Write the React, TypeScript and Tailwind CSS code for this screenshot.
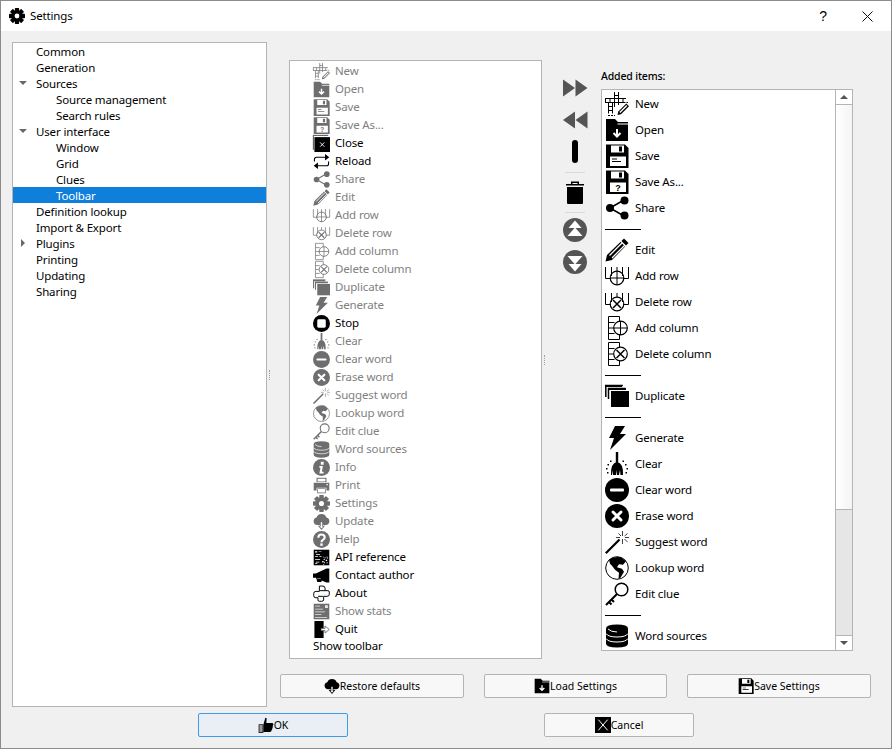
import React from "react";

const F = "font-['Noto_Sans',sans-serif]";

function Glyph({ name }: { name: string }) {
  const line = { fill: "none", stroke: "currentColor", strokeWidth: 1 } as const;
  const wline = { fill: "none", stroke: "#fff", strokeWidth: 2 } as const;
  switch (name) {
    case "new":
      return (
        <g>
          <path {...line} d="M9.500 0v15M13.500 0v13M9.500 3.500h4M0 6.500h21M0 10.500h23M.5 6.500v4M5 6.500v4M18 6.500v4M3.500 10.500v11M7.500 10.500v11M3.500 14.500h4M3.500 18.500h4" />
          <path {...line} strokeDasharray="2 1" d="M3 23.500h7" />
          <path fill="#fff" d="M11 24l1-5 9-9 3 3-9 9z" />
          <path fill="currentColor" d="M12.500 23l.8-3.500 8-8 2.700 2.700-8 8z" />
          <path fill="#fff" d="M14.300 20l7-7 1 1-7 7z" />
        </g>
      );
    case "open":
      return (
        <g>
          <path fill="currentColor" d="M1 1h9l3 3h10v19H1z" />
          <path fill="#fff" d="M12.500 5.500h10.500v1h-10.500z" />
          <path {...wline} d="M12 11v7M8.500 15l3.500 3.500 3.500-3.500" />
        </g>
      );
    case "save":
    case "saveas":
      return (
        <g>
          <path fill="currentColor" d="M1 .5h19l3.500 3.500v20H1z" />
          <path fill="#fff" d="M6 1.500h13v7H6zM5 12.500h16v9.500H5z" />
          <path fill="currentColor" d="M14 2.500h3v5h-3z" />
          {name === "save" ? (
            <path fill="currentColor" d="M7 14.500h5v1H7zM7 17h9v1H7z" />
          ) : (
            <text x="13" y="21" textAnchor="middle" fontSize="9" fontWeight="700" fill="currentColor" fontFamily="Liberation Sans">?</text>
          )}
        </g>
      );
    case "close":
      return (
        <g>
          <path {...line} d="M.5 21V.5h21" />
          <path fill="currentColor" d="M2 3h22v21H2z" />
          <path fill="none" stroke="#fff" strokeWidth="1.300" d="M10 10.500l6 6M16 10.500l-6 6" />
        </g>
      );
    case "reload":
      return (
        <g>
          <path fill="none" stroke="currentColor" strokeWidth="1.500" d="M2 12V9q0-3 3-3h13M22 12v3q0 3-3 3H6" />
          <path fill="currentColor" d="M17 1.500l6 4.500-6 4.500zM7 13.500L1 18l6 4.500z" />
        </g>
      );
    case "share":
      return (
        <g>
          <path fill="none" stroke="currentColor" strokeWidth="1.500" d="M5 12l14-8M5 12l14 8" />
          <circle cx="5" cy="12" r="4" fill="currentColor" />
          <circle cx="19.500" cy="4.500" r="4" fill="currentColor" />
          <circle cx="19.500" cy="19.500" r="4" fill="currentColor" />
        </g>
      );
    case "edit":
      return (
        <g>
          <path fill="currentColor" d="M19 .5L23.500 5 7 22 .5 23.500 2 17z" />
          <path fill="none" stroke="#fff" strokeWidth="1.300" d="M4.500 17.500L17 5M7 20L20 7M15.500 3l5.500 5.500" />
        </g>
      );
    case "addrow":
    case "delrow":
      return (
        <g>
          <path {...line} d="M.5 3v11.500h5.500M23.500 3v11.500h-5.500M6.500 3v9M17.500 3v9M12 3v4" />
          <circle {...line} cx="12" cy="14" r="6.800" strokeWidth="1.200" />
          {name === "addrow" ? (
            <path {...line} d="M12 7v14M5 14h14" />
          ) : (
            <path {...line} strokeWidth="1.500" d="M8 10l8 8M16 10l-8 8" />
          )}
        </g>
      );
    case "addcol":
    case "delcol":
      return (
        <g>
          <path {...line} d="M3.500 .5h11v5M3.500 .5v23h11v-5M3.500 6.500h6M3.500 17.500h6M3.500 12h5" />
          <circle {...line} cx="15.500" cy="12" r="6.800" strokeWidth="1.200" />
          {name === "addcol" ? (
            <path {...line} d="M15.500 5v14M8.500 12h14" />
          ) : (
            <path {...line} strokeWidth="1.500" d="M11.500 8l8 8M19.500 8l-8 8" />
          )}
        </g>
      );
    case "dup":
      return (
        <g>
          <path {...line} strokeWidth="1.500" d="M.8 13V1.500h17M3.500 15V4.500h17" />
          <path fill="currentColor" d="M6 7h18v16H6z" />
          <path fill="currentColor" d="M3 4h18v2H3zM0 1h17v2H0z" />
        </g>
      );
    case "gen":
      return <path fill="currentColor" d="M10 0h10l-5 8h6L5 24l4-12H4z" />;
    case "stop":
      return (
        <g>
          <circle cx="12" cy="12" r="12" fill="currentColor" />
          <rect x="6" y="6" width="12" height="12" rx="2" fill="#fff" />
        </g>
      );
    case "clear":
      return (
        <g>
          <path fill="currentColor" d="M10.800 0h2.400v11h-2.400z" />
          <path fill="currentColor" d="M6 23q-.5-12 6-13 6.500 1 6 13h-2.500l-.5-5-1 5h-2v-5l-1 5H8l-.5-5-.5 5z" />
          <path fill="currentColor" d="M5 8.500h1.500V10H5zM17.500 8.500H19V10h-1.500zM2.500 12H4v1.500H2.500zM20 12h1.500v1.500H20zM1 16h1.500v1.500H1zM21.500 16H23v1.500h-1.500zM2 20h1.500v1.500H2zM20.500 20H22v1.500h-1.500z" />
        </g>
      );
    case "minus":
      return (
        <g>
          <circle cx="12" cy="12" r="12" fill="currentColor" />
          <rect x="5" y="10.500" width="14" height="3" rx="1" fill="#fff" />
        </g>
      );
    case "erase":
      return (
        <g>
          <circle cx="12" cy="12" r="12" fill="currentColor" />
          <path fill="none" stroke="#fff" strokeWidth="3" strokeLinecap="round" d="M8 8l8 8M16 8l-8 8" />
        </g>
      );
    case "wand":
      return (
        <g>
          <path fill="none" stroke="currentColor" strokeWidth="2.200" d="M.8 23.200L14.500 9.500" />
          <path fill="none" stroke="currentColor" strokeWidth="1" opacity=".75" d="M17.500 1v5M17.500 9v5M11 7.500h4M20 7.500h4M13.500 3.500l2.500 2.500M19.500 9l3 3M22.500 3.500L19.500 6" />
        </g>
      );
    case "globe":
      return (
        <g>
          <circle {...line} cx="12" cy="12" r="11.300" />
          <path fill="currentColor" d="M4 3.500Q9 0 16 1.200l5 4-3 3.500-4-.5-2 3 5 1.500 2 3-3.500 6-2 1 .5-6-4-3-3-4-2-2z" />
        </g>
      );
    case "key":
      return (
        <g>
          <circle cx="16.500" cy="7.500" r="6.300" fill="none" stroke="currentColor" strokeWidth="1.500" />
          <path fill="none" stroke="currentColor" strokeWidth="2" d="M12 12L1 23M6 17l3 3M3.500 19.500l3 3" />
        </g>
      );
    case "db":
      return (
        <g>
          <path fill="currentColor" d="M1 4.500Q1 .5 12 .5t11 4v15Q23 23.500 12 23.500T1 19.500z" />
          <path fill="none" stroke="#fff" strokeWidth="1" d="M1 9.500q2 3.500 11 3.500t11-3.500M1 14.500q2 3.500 11 3.500t11-3.500" />
          <path fill="none" stroke="#fff" strokeWidth="1" d="M3 5q3 3 9 3" />
        </g>
      );
    case "info":
      return (
        <g>
          <circle cx="12" cy="12" r="12" fill="currentColor" />
          <path fill="#fff" d="M11 4h4v4h-4zM9 10h5l-1.500 8H15v2.500H9l1.500-8H9z" />
        </g>
      );
    case "print":
      return (
        <g>
          <path fill="currentColor" d="M5 1h14v6H5zM1 8h22v11h-4v-4H5v4H1z" />
          <path fill="currentColor" d="M6 16h12v7H6z" />
          <path fill="#fff" d="M6.500 2.500h11v4h-11zM7 17h10v5H7zM19 10h2v1.500h-2z" />
        </g>
      );
    case "gear":
      return (
        <g>
          <circle cx="12" cy="12" r="8.500" fill="currentColor" />
          <g fill="currentColor">
            <rect x="8.800" y="0" width="6.400" height="24" rx="1" />
            <rect x="8.800" y="0" width="6.400" height="24" rx="1" transform="rotate(45 12 12)" />
            <rect x="8.800" y="0" width="6.400" height="24" rx="1" transform="rotate(90 12 12)" />
            <rect x="8.800" y="0" width="6.400" height="24" rx="1" transform="rotate(135 12 12)" />
          </g>
          <circle cx="12" cy="12" r="3.600" fill="#fff" />
        </g>
      );
    case "cloud":
      return (
        <g>
          <path fill="currentColor" d="M6 17a5.500 5.500 0 01-1-10.800 7.500 7.500 0 0114 0A5.500 5.500 0 0118 17z" />
          <path fill="currentColor" d="M10 12h4v6h3l-5 6-5-6h3z" />
          <path fill="#fff" d="M11 13h2v6h1.500L12 22l-2.500-3H11z" />
        </g>
      );
    case "help":
      return (
        <g>
          <circle cx="12" cy="12" r="12" fill="currentColor" />
          <path fill="none" stroke="#fff" strokeWidth="3" d="M7.500 9.500Q7.500 5 12 5t4.500 4q0 2-2.500 3.500-2 1-2 3.500" />
          <rect x="10.300" y="17.500" width="3.400" height="3.400" fill="#fff" />
        </g>
      );
    case "api":
      return (
        <g>
          <path fill="currentColor" d="M1 1h22v22H1z" />
          <path fill="#fff" d="M3 3h3v2H3zM8 3h4v1H8zM4 7h6v1H4zM3 10h4v1H3zM9 10h3v1H9zM3 14h7v1H3zM4 18h5v1H4zM3 20h3v1H3zM14 11h1v1h-1zM16 12h2v1h-2zM19 11h2v1h-2zM15 14h2v1h-2zM18 15h2v2h-2zM13 17h2v2h-2zM16 18h1v2h-1zM19 19h2v1h-2zM14 21h2v1h-2zM20 13h1v1h-1z" />
        </g>
      );
    case "mega":
      return (
        <g>
          <path fill="currentColor" d="M0 9h4L19 2h4v20h-4l-7-3v2H6l-1-4-1-2H0z" />
          <path fill="#fff" d="M6 15.500h5v1H6z" opacity=".7" />
        </g>
      );
    case "about":
      return (
        <path
          fill="none"
          stroke="currentColor"
          strokeWidth="1.400"
          d="M9 1.500h5q3 0 3 3V8h4q2 0 2 2v3q0 3-3 3h-5v5q0 2-3 2H9q-2 0-2-2v-3H4q-3 0-3-3v-3q0-3 3-3h5zM7 16h7M10 8h7"
        />
      );
    case "stats":
      return (
        <g>
          <path fill="currentColor" d="M1 1h22v22H1z" />
          <path fill="#fff" d="M3 4h7v1H3zM3 8h11v1H3zM3 12h14v1H3zM3 16h9v1H3zM3 20h17v1H3zM17 3h4v4h-4z" opacity=".85" />
        </g>
      );
    case "quit":
      return (
        <g>
          <path fill="currentColor" d="M2 0h13v24H2z" />
          <path fill="none" stroke="#6e6e6e" strokeWidth="1.300" d="M11 10.500h6V7l6 5-6 5v-3.500h-6" />
          <path fill="#fff" d="M11.700 11.200h4.800v1.600h-4.800z" />
        </g>
      );
    case "trash":
      return (
        <g>
          <path fill="currentColor" d="M3 4h18v1.500H3zM8 1.500h8V4h-1.500V3h-5v1H8z" />
          <path fill="currentColor" d="M4 7h16v16a1 1 0 01-1 1H5a1 1 0 01-1-1z" />
        </g>
      );
    case "thumb":
      return (
        <g>
          <path fill="currentColor" d="M11 1l2 1-.5 7H21q2 0 2 2t-1 2.500q1 2-.5 3 .5 2-1 3 0 3-3 3H8v-11z" />
          <path fill="currentColor" d="M1 11h7v13H1z" />
          <path fill="#fff" d="M2 12h5v11H2z" opacity=".6" />
        </g>
      );
    case "cancelBox":
      return (
        <g>
          <path fill="currentColor" d="M0 0h24v24H0z" />
          <path fill="none" stroke="#fff" strokeWidth="1.500" d="M5 4l14 16M19 4L5 20" />
        </g>
      );
    case "ff":
      return <path fill="currentColor" d="M0 3.500l12 8.500L0 20.500zM12.500 3.500l12 8.500-12 8.500z" />;
    case "rw":
      return <path fill="currentColor" d="M24.500 3.500L12.500 12l12 8.500zM12 3.500L0 12l12 8.500z" />;
    case "up":
      return (
        <g>
          <circle cx="12" cy="12" r="12" fill="currentColor" />
          <path fill="#fff" d="M12 2.500l6.500 7.500h-13zM12 9.500l7.500 8.500h-15z" />
        </g>
      );
    case "down":
      return (
        <g>
          <circle cx="12" cy="12" r="12" fill="currentColor" />
          <path fill="#fff" d="M12 21.500l6.500-7.500h-13zM12 14.500L19.500 6h-15z" />
        </g>
      );
    default:
      return null;
  }
}

function Icon({ name, size, className = "" }: { name: string; size: number; className?: string }) {
  return (
    <svg viewBox="0 0 24 24" width={size} height={size} className={`block shrink-0 overflow-visible ${className}`}>
      <Glyph name={name} />
    </svg>
  );
}

const tree: [string, number, string?, boolean?][] = [
  ["Common", 0],
  ["Generation", 0],
  ["Sources", 0, "down"],
  ["Source management", 1],
  ["Search rules", 1],
  ["User interface", 0, "down"],
  ["Window", 1],
  ["Grid", 1],
  ["Clues", 1],
  ["Toolbar", 1, undefined, true],
  ["Definition lookup", 0],
  ["Import & Export", 0],
  ["Plugins", 0, "right"],
  ["Printing", 0],
  ["Updating", 0],
  ["Sharing", 0],
];

const available: [string, string, boolean][] = [
  ["new", "New", false],
  ["open", "Open", false],
  ["save", "Save", false],
  ["saveas", "Save As...", false],
  ["close", "Close", true],
  ["reload", "Reload", true],
  ["share", "Share", false],
  ["edit", "Edit", false],
  ["addrow", "Add row", false],
  ["delrow", "Delete row", false],
  ["addcol", "Add column", false],
  ["delcol", "Delete column", false],
  ["dup", "Duplicate", false],
  ["gen", "Generate", false],
  ["stop", "Stop", true],
  ["clear", "Clear", false],
  ["minus", "Clear word", false],
  ["erase", "Erase word", false],
  ["wand", "Suggest word", false],
  ["globe", "Lookup word", false],
  ["key", "Edit clue", false],
  ["db", "Word sources", false],
  ["info", "Info", false],
  ["print", "Print", false],
  ["gear", "Settings", false],
  ["cloud", "Update", false],
  ["help", "Help", false],
  ["api", "API reference", true],
  ["mega", "Contact author", true],
  ["about", "About", true],
  ["stats", "Show stats", false],
  ["quit", "Quit", true],
];

const added: ([string, string] | null)[] = [
  ["new", "New"],
  ["open", "Open"],
  ["save", "Save"],
  ["saveas", "Save As..."],
  ["share", "Share"],
  null,
  ["edit", "Edit"],
  ["addrow", "Add row"],
  ["delrow", "Delete row"],
  ["addcol", "Add column"],
  ["delcol", "Delete column"],
  null,
  ["dup", "Duplicate"],
  null,
  ["gen", "Generate"],
  ["clear", "Clear"],
  ["minus", "Clear word"],
  ["erase", "Erase word"],
  ["wand", "Suggest word"],
  ["globe", "Lookup word"],
  ["key", "Edit clue"],
  null,
  ["db", "Word sources"],
];

function Btn({ icon, label, focus = false, width }: { icon: string; label: string; focus?: boolean; width: string }) {
  return (
    <div
      className={`flex h-[24px] items-center justify-center rounded-[2px] border text-[10.5px] tracking-normal text-black ${width} ${
        focus ? "border-[#3d9bea] bg-[#e9eff4]" : "border-[#b4b4b4] bg-[#f8f8f8]"
      }`}
    >
      <Icon name={icon} size={16} />
      <span>{label}</span>
    </div>
  );
}

export default function App() {
  return (
    <div className={`${F} flex h-[749px] w-[892px] flex-col border border-[#8c8c8c] bg-[#f0f0f0] text-[11.5px] leading-[16px] tracking-[-0.15px] text-black`}>
      <div className="flex h-[30px] shrink-0 items-center bg-white">
        <Icon name="gear" size={16} className="ml-[8px]" />
        <span className="ml-[5px] flex-1">Settings</span>
        <span className="mr-[35px] font-['Liberation_Sans',sans-serif] text-[14px]">?</span>
        <svg width="11" height="11" viewBox="0 0 11 11" className="mr-[18px]">
          <path d="M.5.5l10 10M10.500.5l-10 10" stroke="#111" fill="none" />
        </svg>
      </div>

      <div className="flex min-h-0 flex-1 flex-col px-[11px] pt-[11px]">
        <div className="flex h-[665px] shrink-0">
          <div className="w-[255px] shrink-0 border border-[#b4b4b4] bg-white">
            {tree.map(([label, depth, arrow, selected]) => (
              <div key={label} className={`flex h-[16px] items-center ${selected ? "bg-[#0f7fdc] text-white" : ""}`}>
                <div className="flex w-[23px] shrink-0 items-center justify-center pr-[3px]">
                  {arrow === "down" && <div className="h-0 w-0 border-x-[4px] border-t-[4px] border-x-transparent border-t-[#6a6a6a]" />}
                  {arrow === "right" && <div className="h-0 w-0 border-y-[4px] border-l-[4px] border-y-transparent border-l-[#6a6a6a]" />}
                </div>
                <span className={`pt-[1px] ${depth ? "ml-[20px]" : ""}`}>{label}</span>
              </div>
            ))}
          </div>

          <div className="relative w-[22px] shrink-0">
            <div className="absolute left-[2px] top-[328px] h-[10px] w-[1px] border-l border-dotted border-[#a0a0a0]" />
          </div>

          <div className="relative flex min-w-0 flex-1 flex-col">
            <div className="absolute left-[255px] top-[313px] h-[10px] w-[1px] border-l border-dotted border-[#a0a0a0]" />
            <div className="flex h-[617px] shrink-0 pt-[18px]">
              <div className="h-[599px] w-[253px] shrink-0 border border-[#b4b4b4] bg-white pl-[23px] pt-px">
                {available.map(([icon, label, enabled]) => (
                  <div key={label} className={`flex h-[18px] items-center ${enabled ? "text-black" : "text-[#7f7f7f]"}`}>
                    <Icon name={icon} size={17} className={enabled ? "" : "text-[#6e6e6e]"} />
                    <span className="ml-[5px]">{label}</span>
                  </div>
                ))}
                <div className="flex h-[16px] items-center">Show toolbar</div>
              </div>

              <div className="flex w-[59px] shrink-0 flex-col items-center pl-[7px] pt-[16px]">
                <Icon name="ff" size={24} className="text-[#555]" />
                <Icon name="rw" size={24} className="mt-[8px] text-[#555]" />
                <div className="mt-[8px] h-[23px] w-[6px] shrink-0 rounded-[3px] bg-black" />
                <div className="mt-[9px] h-px w-[20px] shrink-0 bg-[#d8d8d8]" />
                <Icon name="trash" size={24} className="mt-[7px]" />
                <div className="mt-[8px] h-px w-[20px] shrink-0 bg-[#d8d8d8]" />
                <Icon name="up" size={24} className="mt-[5px] text-[#555]" />
                <Icon name="down" size={24} className="mt-[8px] text-[#555]" />
              </div>

              <div className="flex w-[252px] shrink-0 flex-col">
                <div className="flex h-[29px] shrink-0 items-center pt-[3px] text-[10.5px] font-medium">Added items:</div>
                <div className="flex h-[562px] shrink-0 border border-[#b4b4b4] bg-white">
                  <div className="min-w-0 flex-1 overflow-hidden pl-[3px] pt-px">
                    {added.map((row, i) =>
                      row ? (
                        <div key={i} className="flex h-[26px] items-center">
                          <Icon name={row[0]} size={24} />
                          <span className="ml-[6px]">{row[1]}</span>
                        </div>
                      ) : (
                        <div key={i} className="flex h-[16px] items-center">
                          <div className="h-px w-[36px] bg-black" />
                        </div>
                      )
                    )}
                  </div>
                  <div className="flex w-[17px] shrink-0 flex-col border-l border-[#b4b4b4] bg-[#e6e6e6]">
                    <div className="flex h-[15px] items-center justify-center border-b border-[#b4b4b4] bg-white">
                      <div className="h-0 w-0 border-x-[4px] border-b-[4px] border-x-transparent border-b-[#555]" />
                    </div>
                    <div className="h-[405px] border-b border-[#b4b4b4] bg-gradient-to-r from-white to-[#f4f4f4]" />
                    <div className="flex-1" />
                    <div className="flex h-[15px] items-center justify-center border-t border-[#b4b4b4] bg-white">
                      <div className="h-0 w-0 border-x-[4px] border-t-[4px] border-x-transparent border-t-[#555]" />
                    </div>
                  </div>
                </div>
              </div>
            </div>

            <div className="ml-[-9px] mt-[15px] flex w-[591px] justify-between">
              <Btn icon="cloud" label="Restore defaults" width="w-[184px]" />
              <Btn icon="open" label="Load Settings" width="w-[183px]" />
              <Btn icon="save" label="Save Settings" width="w-[184px]" />
            </div>
          </div>
        </div>

        <div className="mt-[6px] flex pl-[186px]">
          <Btn icon="thumb" label="OK" focus width="w-[150px]" />
          <div className="w-[196px]" />
          <Btn icon="cancelBox" label="Cancel" width="w-[150px]" />
        </div>
      </div>
    </div>
  );
}
